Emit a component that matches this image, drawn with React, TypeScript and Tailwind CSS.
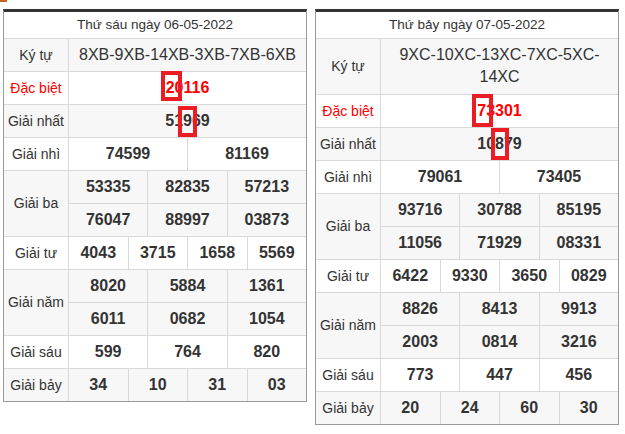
import React from "react";

const font = "font-['Liberation_Sans',Arial,sans-serif]";

function Num({ v, red, marks }: { v: string; red?: boolean; marks?: string[] }) {
  return (
    <span
      className={`relative inline-block text-[16px] leading-[22px] font-bold ${
        red ? "text-[#ff0000]" : "text-[#333]"
      }`}
    >
      {v}
      {marks?.map((m, i) => (
        <span key={i} className={m} />
      ))}
    </span>
  );
}

type RowDef = {
  label: string;
  red?: boolean;
  sub: { vals: string[] }[];
  marks?: string[];
};

function Row({ row, idx }: { row: RowDef; idx: number }) {
  const stripe = idx % 2 === 0 ? "bg-[#f7f7f7]" : "bg-white";
  return (
    <div className={`flex border-t border-[#d9d9d9] ${stripe}`}>
      <div
        className={`w-[65px] shrink-0 border-r border-[#d9d9d9] flex items-center justify-center text-[14px] ${
          row.red ? "text-[#ff0000]" : "text-[#333]"
        }`}
      >
        {row.label}
      </div>
      <div className="flex-1 flex flex-col">
        {row.sub.map((s, si) => (
          <div
            key={si}
            className={`flex ${si > 0 ? "border-t border-[#d9d9d9] h-[33px]" : "h-[32px]"}`}
          >
            {s.vals.map((v, vi) => (
              <div
                key={vi}
                className={`flex-1 basis-0 flex items-center justify-center ${
                  vi > 0 ? "border-l border-[#d9d9d9]" : ""
                }`}
              >
                <Num v={v} red={row.red} marks={row.marks} />
              </div>
            ))}
          </div>
        ))}
      </div>
    </div>
  );
}

function Table({
  title,
  kytu,
  kytuPad,
  rows,
}: {
  title: string;
  kytu: React.ReactNode;
  kytuPad: string;
  rows: RowDef[];
}) {
  return (
    <div className="w-[304px] border-x border-b border-x-[#999] border-b-[#999] border-t-[3px] border-t-[#333] bg-white">
      <div className="h-[26px] flex items-center justify-center text-[13.5px] text-[#333]">
        {title}
      </div>
      <div className="flex border-t border-[#d9d9d9] bg-[#f7f7f7]">
        <div className="w-[65px] shrink-0 border-r border-[#d9d9d9] flex items-center justify-center text-[14px] text-[#333]">
          Ký tự
        </div>
        <div className={`flex-1 px-[4px] text-center text-[16px] leading-[22px] text-[#333] ${kytuPad}`}>
          {kytu}
        </div>
      </div>
      {rows.map((r, i) => (
        <Row key={i} row={r} idx={i + 1} />
      ))}
    </div>
  );
}

const leftRows: RowDef[] = [
  {
    label: "Đặc biệt",
    red: true,
    sub: [{ vals: ["20116"] }],
    marks: ["absolute left-[-5px] top-[-6px] w-[21px] h-[30px] border-[4px] border-[#ec1c24]"],
  },
  {
    label: "Giải nhất",
    sub: [{ vals: ["51969"] }],
    marks: ["absolute left-[13px] top-[-4px] w-[19px] h-[31px] border-[4px] border-[#ec1c24]"],
  },
  { label: "Giải nhì", sub: [{ vals: ["74599", "81169"] }] },
  {
    label: "Giải ba",
    sub: [{ vals: ["53335", "82835", "57213"] }, { vals: ["76047", "88997", "03873"] }],
  },
  { label: "Giải tư", sub: [{ vals: ["4043", "3715", "1658", "5569"] }] },
  {
    label: "Giải năm",
    sub: [{ vals: ["8020", "5884", "1361"] }, { vals: ["6011", "0682", "1054"] }],
  },
  { label: "Giải sáu", sub: [{ vals: ["599", "764", "820"] }] },
  { label: "Giải bảy", sub: [{ vals: ["34", "10", "31", "03"] }] },
];

const rightRows: RowDef[] = [
  {
    label: "Đặc biệt",
    red: true,
    sub: [{ vals: ["73301"] }],
    marks: ["absolute left-[-5px] top-[-6px] w-[21px] h-[33px] border-[4px] border-[#ec1c24]"],
  },
  {
    label: "Giải nhất",
    sub: [{ vals: ["10879"] }],
    marks: ["absolute left-[14px] top-[-5px] w-[18px] h-[32px] border-[4px] border-[#ec1c24]"],
  },
  { label: "Giải nhì", sub: [{ vals: ["79061", "73405"] }] },
  {
    label: "Giải ba",
    sub: [{ vals: ["93716", "30788", "85195"] }, { vals: ["11056", "71929", "08331"] }],
  },
  { label: "Giải tư", sub: [{ vals: ["6422", "9330", "3650", "0829"] }] },
  {
    label: "Giải năm",
    sub: [{ vals: ["8826", "8413", "9913"] }, { vals: ["2003", "0814", "3216"] }],
  },
  { label: "Giải sáu", sub: [{ vals: ["773", "447", "456"] }] },
  { label: "Giải bảy", sub: [{ vals: ["20", "24", "60", "30"] }] },
];

export default function App() {
  return (
    <div className={`w-[625px] h-[434px] bg-white ${font}`}>
      <div className="h-[9px]">
        <div className="w-[7px] h-[2px] bg-[#c8641e]" />
      </div>
      <div className="flex items-start gap-[8px] pl-[3px]">
        <Table
          title="Thứ sáu ngày 06-05-2022"
          kytu="8XB-9XB-14XB-3XB-7XB-6XB"
          kytuPad="py-[5px]"
          rows={leftRows}
        />
        <Table
          title="Thứ bảy ngày 07-05-2022"
          kytu={
            <>
              9XC-10XC-13XC-7XC-5XC-
              <br />
              14XC
            </>
          }
          kytuPad="pt-[5px] pb-[6px]"
          rows={rightRows}
        />
      </div>
    </div>
  );
}
